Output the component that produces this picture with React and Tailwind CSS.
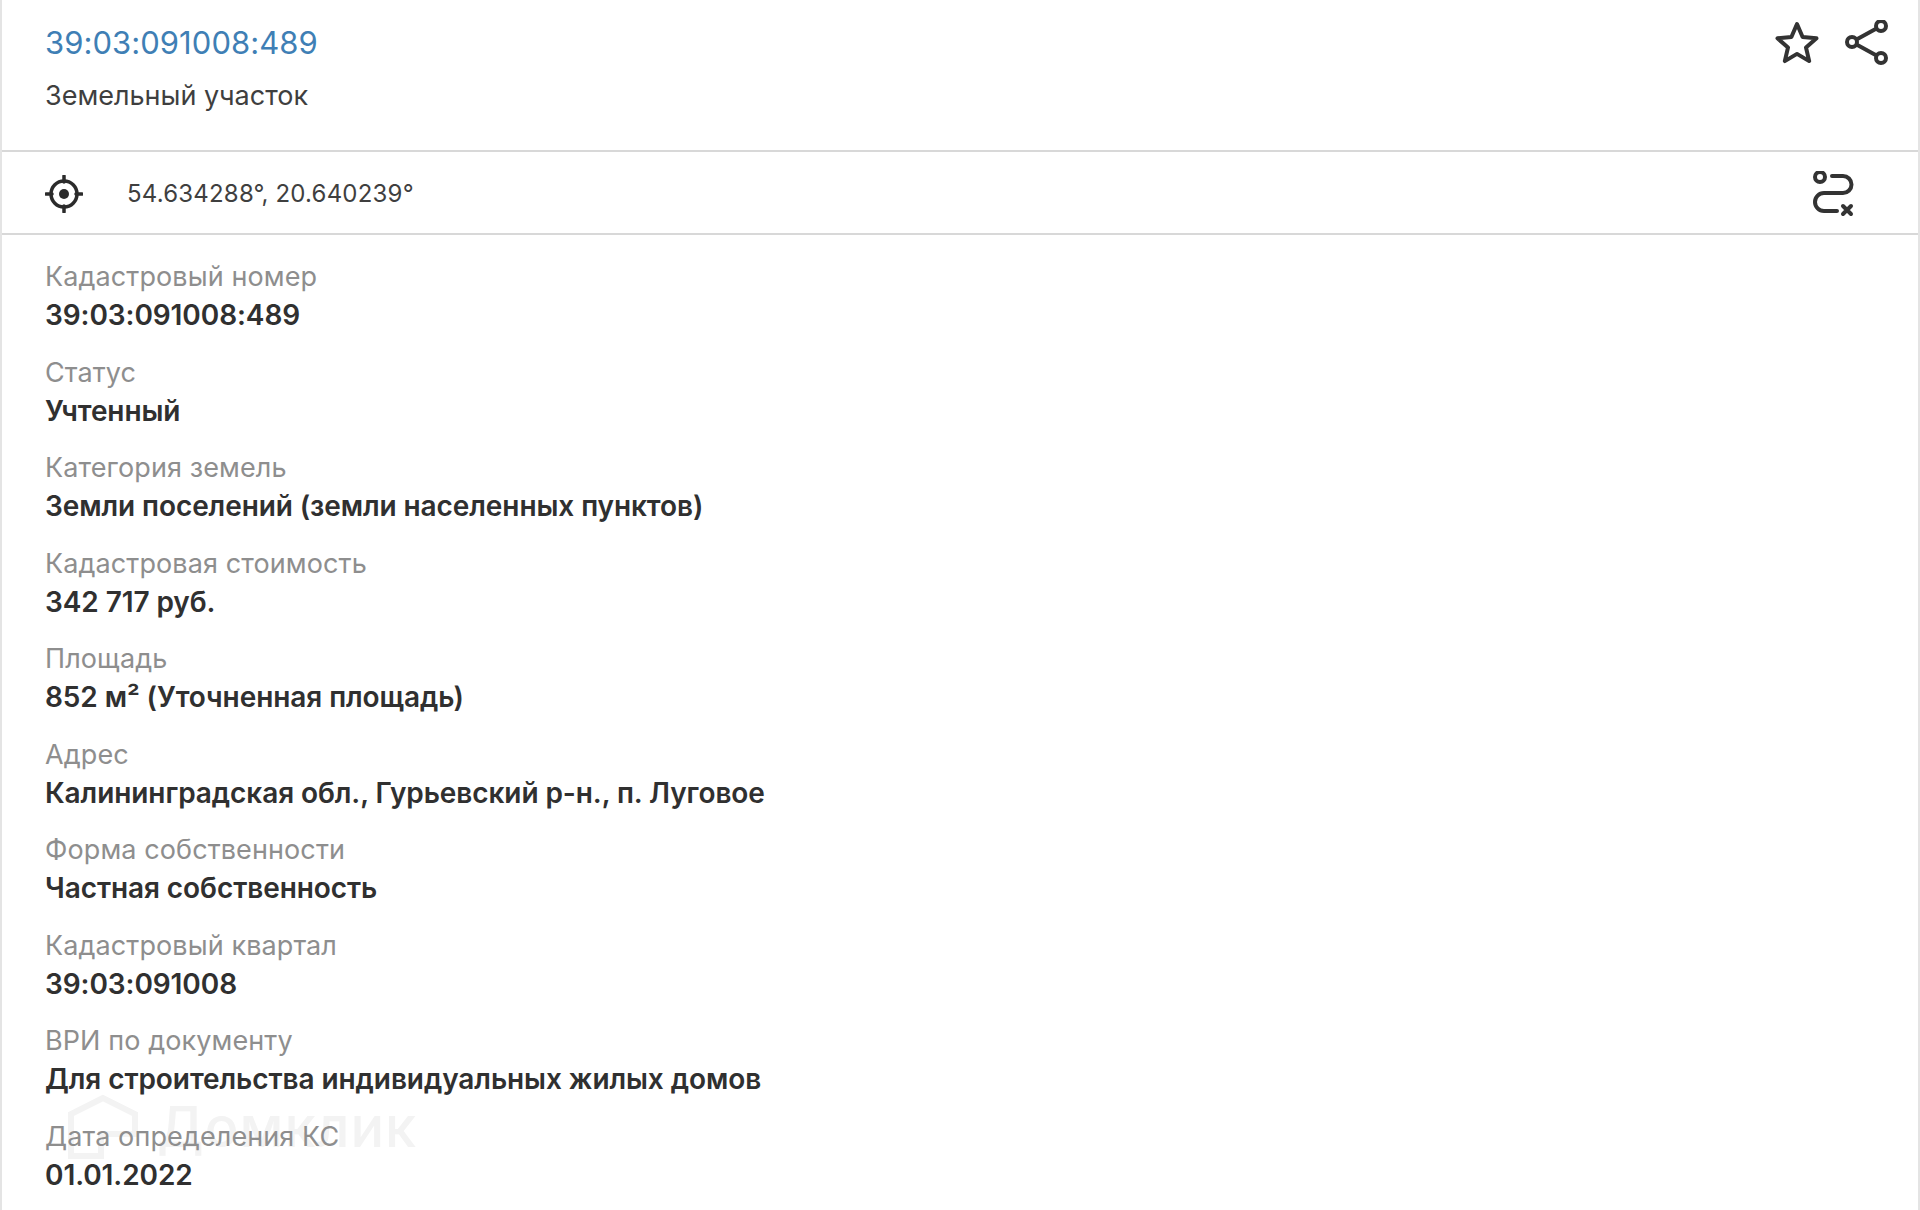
import React from 'react'

const rows = [
  ['Кадастровый номер', '39:03:091008:489'],
  ['Статус', 'Учтенный'],
  ['Категория земель', 'Земли поселений (земли населенных пунктов)'],
  ['Кадастровая стоимость', '342 717 руб.'],
  ['Площадь', '852 м² (Уточненная площадь)'],
  ['Адрес', 'Калининградская обл., Гурьевский р-н., п. Луговое'],
  ['Форма собственности', 'Частная собственность'],
  ['Кадастровый квартал', '39:03:091008'],
  ['ВРИ по документу', 'Для строительства индивидуальных жилых домов'],
  ['Дата определения КС', '01.01.2022'],
]

const Row = ({label, value}) => (
  <div className="h-[95.5px]">
    <div className="text-[27px] leading-[38px] tracking-[0.1px] text-[#8e8e8e]">{label}</div>
    <div className="text-[28px] leading-[38px] tracking-[-0.08px] font-semibold text-[#303030]">{value}</div>
  </div>
)

const App = () => {
  return (
    <div className="relative w-[1920px] h-[1210px] overflow-hidden bg-white border-x-2 border-[#e4e4e4] font-['Inter','Liberation_Sans',sans-serif]">
      <div className="h-[152px] border-b-2 border-[#d8d8d8] pl-[43px] pr-[29px] pt-[21px] flex justify-between items-start">
        <div>
          <div className="text-[31px] leading-[44px] tracking-[0.05px] text-[#3f7fb5]">39:03:091008:489</div>
          <div className="mt-[9px] text-[27px] leading-[44px] text-[#3f3f3f]">Земельный участок</div>
        </div>
        <div className="flex items-center gap-[25px] -mt-[1px]">
          <svg width="46" height="46" viewBox="0 0 46 46" fill="none" stroke="#333" strokeWidth="4" strokeLinejoin="round">
            <path d="M23 4l5.6 13 13.9 1.3-10.5 9.2 3.2 13.6L23 33.9l-12.2 7.2L14 27.5 3.5 18.3 17.4 17z" />
          </svg>
          <svg width="44" height="46" viewBox="0 0 44 46" fill="none" stroke="#333" strokeWidth="4">
            <circle cx="36" cy="6" r="5" />
            <circle cx="7" cy="22" r="5" />
            <circle cx="36" cy="38" r="5" />
            <path d="M11.5 19.5L31.5 8.5M11.5 24.5L31.5 35.5" />
          </svg>
        </div>
      </div>
      <div className="h-[83px] border-b-2 border-[#d8d8d8] pl-[43px] pr-[63px] pt-[2px] flex items-center justify-between">
        <div className="flex items-center">
          <svg width="38" height="38" viewBox="0 0 38 38" fill="none" stroke="#2b2b2b" strokeWidth="3.5">
            <circle cx="19" cy="19" r="13" />
            <circle cx="19" cy="19" r="5" fill="#2b2b2b" stroke="none" />
            <path d="M19 1v6M19 31v6M1 19h6M31 19h6" strokeLinecap="round" />
          </svg>
          <div className="ml-[44px] pt-[1px] text-[24px] tracking-[0.2px] text-[#3f3f3f]">54.634288°, 20.640239°</div>
        </div>
        <svg width="42" height="46" viewBox="0 0 42 46" fill="none" stroke="#333" strokeWidth="4" strokeLinecap="round">
          <circle cx="7" cy="6" r="5" />
          <path d="M19 5h11a8.5 8.5 0 0 1 0 17H11a9 9 0 0 0 0 18h13" />
          <path d="M30 35l8 8M38 35l-8 8" />
        </svg>
      </div>
      {/* watermark, sits under the rows */}
      <div className="absolute left-[63px] top-[1094px] flex items-center gap-[16px] text-[#f3f3f3]">
        <svg width="76" height="66" viewBox="0 0 76 66" fill="none" stroke="#f3f3f3" strokeWidth="6">
          <path d="M38 4L6 20v42h30V40h34V20z" />
        </svg>
        <div className="text-[56px] leading-[66px] font-medium tracking-[1px]">Домклик</div>
      </div>
      <div className="relative pl-[43px] pt-[23px]">
        {rows.map(([label, value]) => (
          <Row key={label} label={label} value={value} />
        ))}
      </div>
    </div>
  )
}

export default App
